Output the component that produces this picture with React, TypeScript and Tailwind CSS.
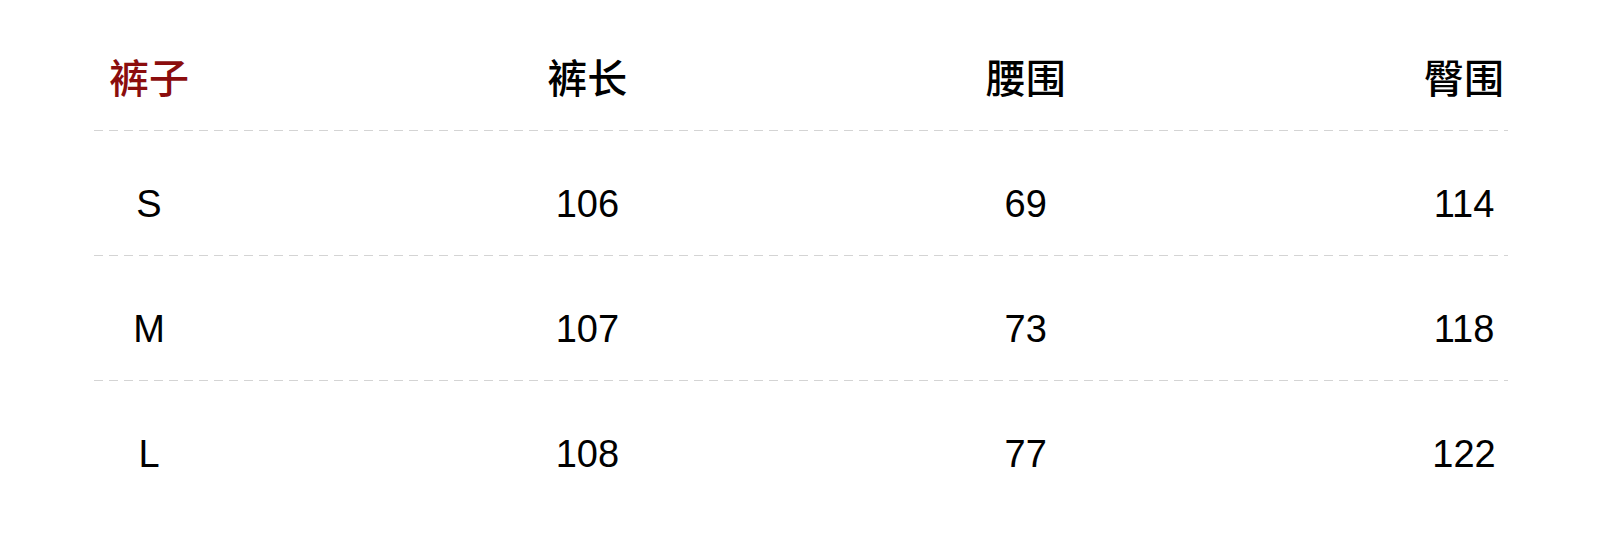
import React from "react";

const headers = ["裤长", "腰围", "臀围"];
const rows = [
  ["S", "106", "69", "114"],
  ["M", "107", "73", "118"],
  ["L", "108", "77", "122"],
];

function Dashed() {
  return (
    <div
      className="h-px w-full"
      style={{
        backgroundImage:
          "repeating-linear-gradient(to right, #d4d4d4 0px, #d4d4d4 9px, transparent 9px, transparent 15px)",
      }}
    />
  );
}

export default function App() {
  return (
    <div
      className="w-[1600px] h-[552px] bg-white overflow-hidden"
      style={{ fontFamily: '"Liberation Sans", "Noto Sans CJK SC", sans-serif' }}
    >
      <div className="ml-[94px] w-[1414px] pt-[6px]">
        <div className="h-[125px] flex flex-col">
          <div className="flex justify-between pl-[15px] pr-[4px] pt-[50px] flex-1">
            <div
              className="w-[80px] text-center text-[40px] leading-[40px] font-medium text-[#8b0d0d] whitespace-nowrap flex justify-center"
              style={{ fontFamily: '"Noto Sans CJK SC", sans-serif' }}
            >
              裤子
            </div>
            {headers.map((h) => (
              <div
                key={h}
                className="w-[80px] text-center text-[40px] leading-[40px] font-medium text-black whitespace-nowrap flex justify-center"
                style={{ fontFamily: '"Noto Sans CJK SC", sans-serif' }}
              >
                {h}
              </div>
            ))}
          </div>
          <Dashed />
        </div>
        {rows.map((r, i) => (
          <div key={i} className="h-[125px] flex flex-col">
            <div className="flex justify-between pl-[15px] pr-[4px] pt-[53px] flex-1">
              {r.map((c, j) => (
                <div key={j} className="w-[80px] text-center text-[38px] leading-[40px] text-black">
                  {c}
                </div>
              ))}
            </div>
            {i < rows.length - 1 && <Dashed />}
          </div>
        ))}
      </div>
    </div>
  );
}
